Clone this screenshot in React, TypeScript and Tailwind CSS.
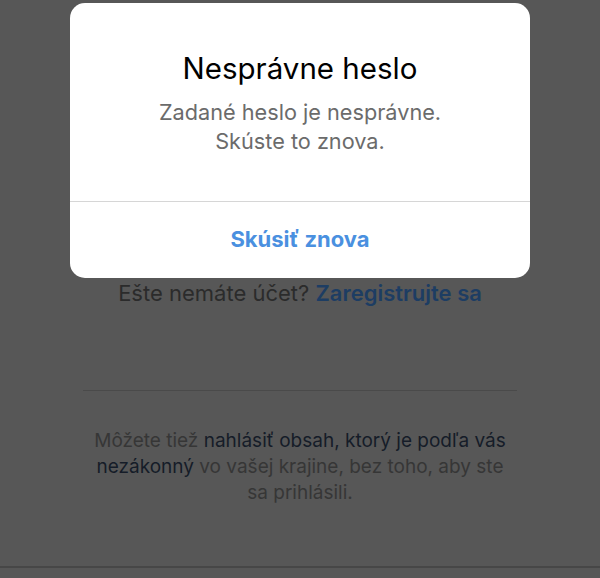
export default function App() {
  return (
    <div className="relative h-[578px] w-[600px] overflow-hidden bg-[#575757]" style={{ fontFamily: 'Inter, "Noto Sans", sans-serif' }}>
      <div className="flex h-full flex-col">
        <div className="h-[278px]" />
        <p className="text-center text-[22px] leading-[30px] text-[#2b2b2b]">
          Ešte nemáte účet? <span className="font-semibold text-[#1d3d63]">Zaregistrujte sa</span>
        </p>
        <div className="h-[82px]" />
        <div className="mx-[83px] h-px bg-[#4a4a4a]" />
        <div className="h-[37px]" />
        <p className="mx-auto w-[415px] text-center text-[19px] leading-[26px] text-[#363636]">
          Môžete tiež <span className="text-[#151c28]">nahlásiť obsah, ktorý je podľa vás nezákonný</span> vo vašej krajine, bez toho, aby ste sa prihlásili.
        </p>
        <div className="flex-1" />
        <div className="h-[2px] bg-[#474747]" />
        <div className="h-[10px]" />
      </div>

      <div className="absolute left-[70px] top-[3px] flex h-[275px] w-[460px] flex-col overflow-hidden rounded-[15px] bg-white">
        <div className="flex h-[198px] flex-col items-center pt-[47px]">
          <h2 className="text-[29.5px] leading-[36px] text-black">Nesprávne heslo</h2>
          <div className="mt-[12px] text-center text-[21.7px] leading-[29px] text-[#6b6b6b]">
            <div>Zadané heslo je nesprávne.</div>
            <div>Skúste to znova.</div>
          </div>
        </div>
        <div className="h-px bg-[#d6d6d6]" />
        <div className="flex flex-1 items-center justify-center pb-[1px]">
          <span className="text-[22px] font-bold text-[#4a90e0]">Skúsiť znova</span>
        </div>
      </div>
    </div>
  );
}
